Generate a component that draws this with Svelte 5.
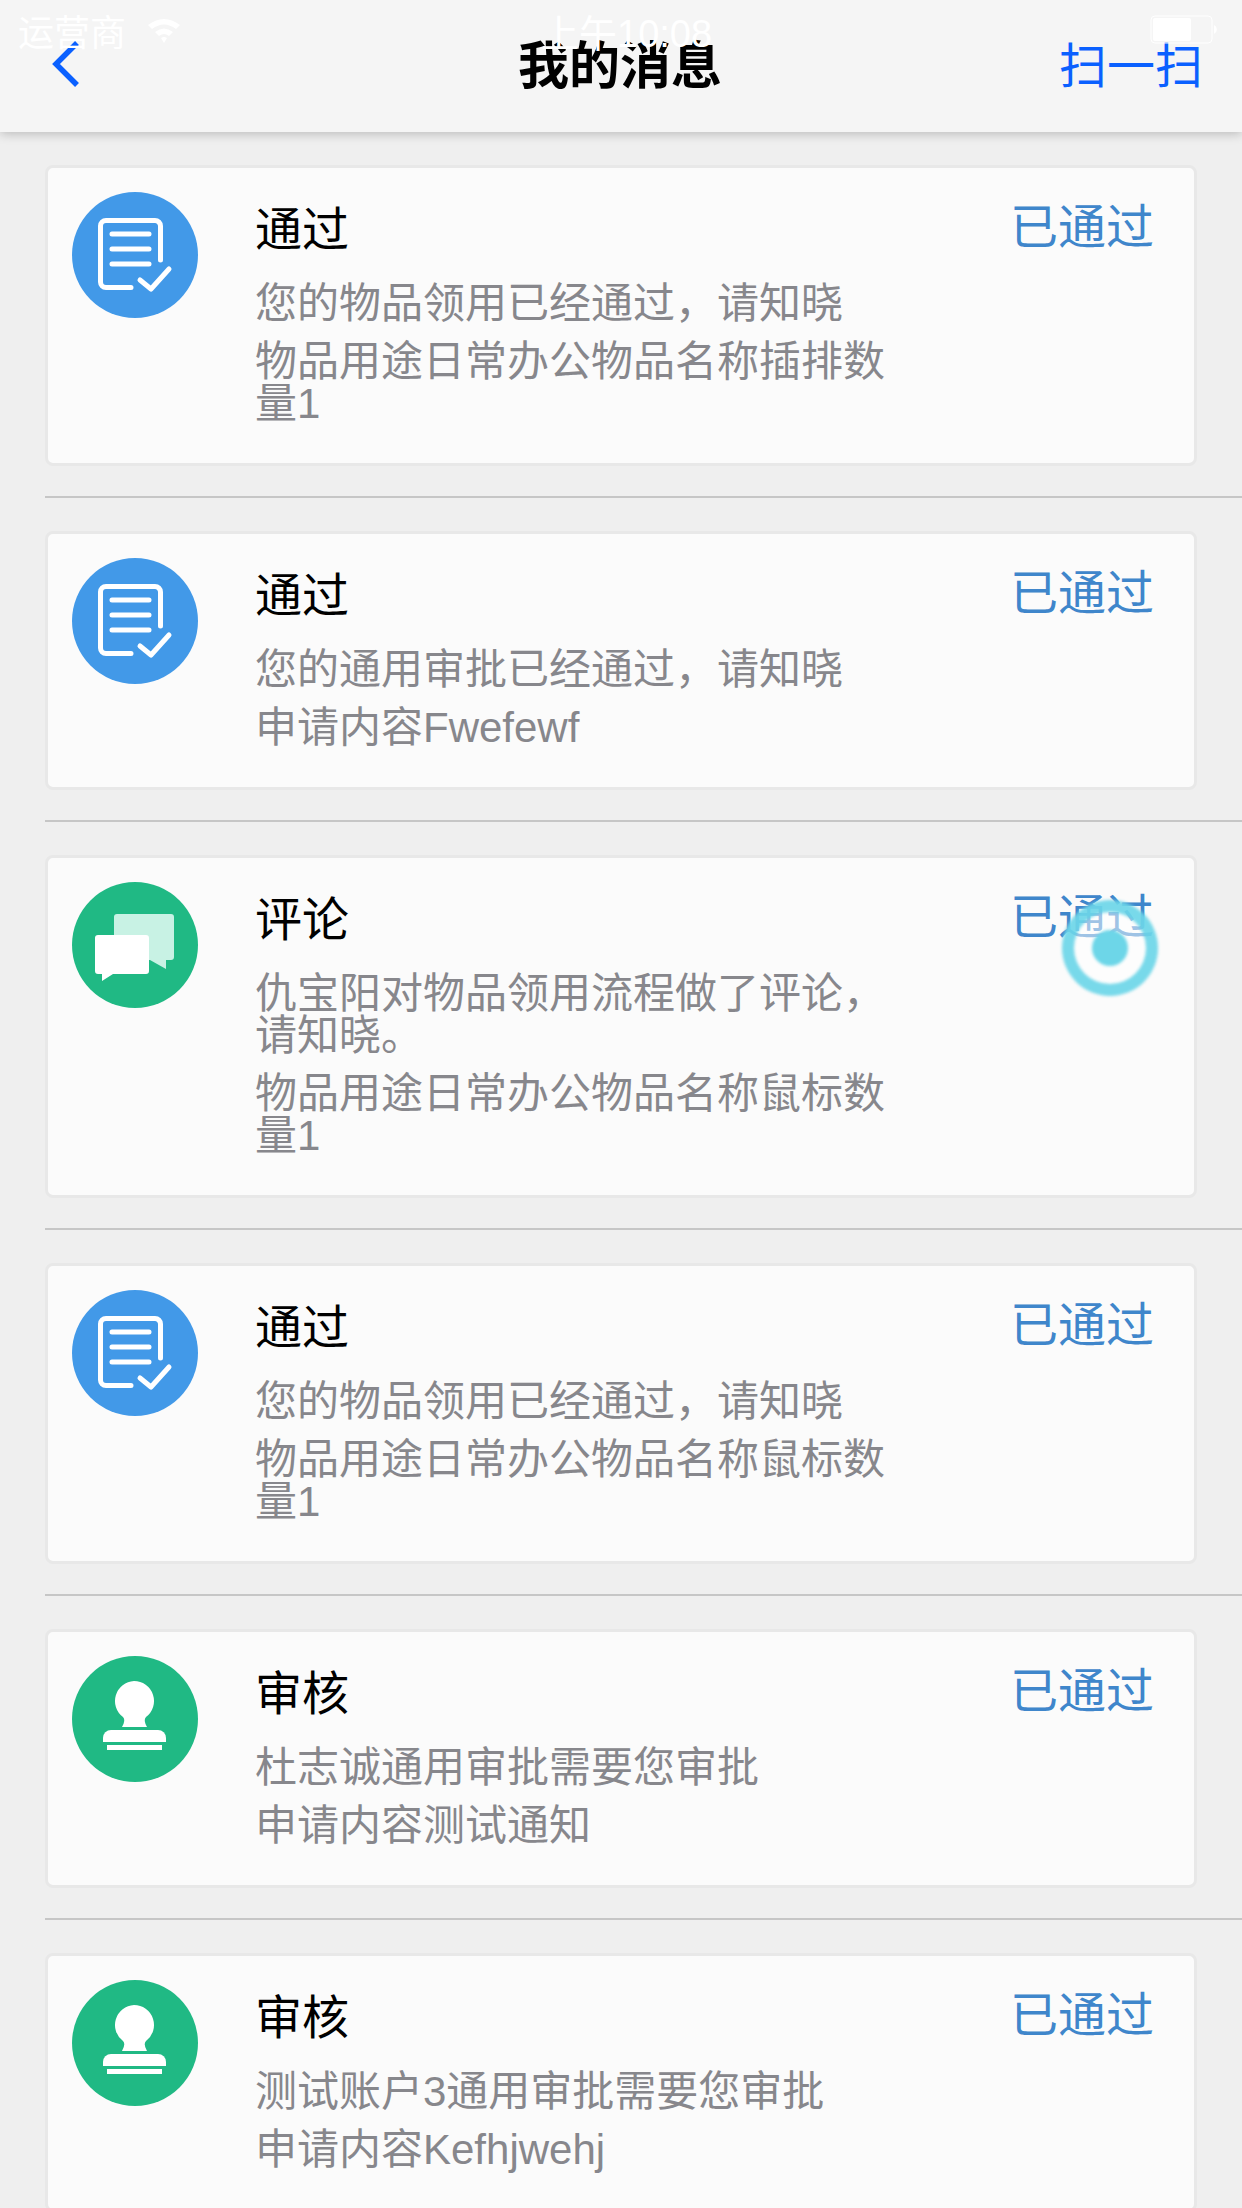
<script>
	const items = [
		{ icon: 'doc', title: '通过', lines: ['您的物品领用已经通过，请知晓', '物品用途日常办公物品名称插排数量1'] },
		{ icon: 'doc', title: '通过', lines: ['您的通用审批已经通过，请知晓', '申请内容Fwefewf'] },
		{ icon: 'chat', title: '评论', lines: ['仇宝阳对物品领用流程做了评论，请知晓。', '物品用途日常办公物品名称鼠标数量1'] },
		{ icon: 'doc', title: '通过', lines: ['您的物品领用已经通过，请知晓', '物品用途日常办公物品名称鼠标数量1'] },
		{ icon: 'stamp', title: '审核', lines: ['杜志诚通用审批需要您审批', '申请内容测试通知'] },
		{ icon: 'stamp', title: '审核', lines: ['测试账户3通用审批需要您审批', '申请内容Kefhjwehj'] }
	];
</script>

<div class="page">
	<header class="nav">
		<svg class="back" width="30" height="46" viewBox="0 0 30 46">
			<path d="M27 2 L6 23 L27 44" fill="none" stroke="#0a60ff" stroke-width="5.5" />
		</svg>
		<h1>我的消息</h1>
		<span class="scan">扫一扫</span>
	</header>

	<div class="statusbar">
		<span class="carrier">运营商</span>
		<svg class="wifi" width="36" height="28" viewBox="0 0 36 28">
			<path d="M2 9 Q18 -3 34 9 L30 13 Q18 4 6 13 Z M9 16 Q18 9 27 16 L23 20 Q18 16 13 20 Z M15 22 Q18 20 21 22 L18 27 Z" fill="#fff" />
		</svg>
		<span class="time">上午10:08</span>
		<svg class="battery" width="68" height="30" viewBox="0 0 68 30">
			<rect x="1" y="1" width="61" height="27" rx="4" fill="none" stroke="#fff" stroke-width="1" />
			<rect x="3" y="3" width="38" height="23" rx="2" fill="#fff" />
			<path d="M64 10 a5 5 0 0 1 0 9 Z" fill="#fff" />
		</svg>
	</div>

	<main class="list">
		{#each items as item}
			<section class="row">
				<article class="card">
					<div class="avatar" class:blue={item.icon === 'doc'}>
						<svg width="126" height="126" viewBox="0 0 126 126">
							{#if item.icon === 'doc'}
								<g fill="none" stroke="#fff" stroke-width="5" stroke-linecap="round" stroke-linejoin="round">
									<path d="M88.5 68 V34 a5.5 5.5 0 0 0 -5.5 -5.5 H34 a5.5 5.5 0 0 0 -5.5 5.5 V90 a5.5 5.5 0 0 0 5.5 5.5 H59" />
									<path d="M40 42 H77 M40 57 H77 M40 72 H77" />
									<path d="M68 88 L79 97 L97 77" />
								</g>
							{:else if item.icon === 'chat'}
								<path d="M45 32 H99 a3 3 0 0 1 3 3 V75 a3 3 0 0 1 -3 3 H94 V87 L78 78 H45 a3 3 0 0 1 -3 -3 V35 a3 3 0 0 1 3 -3 Z" fill="#c8f2e4" />
								<path d="M26 53 H74 a3 3 0 0 1 3 3 V89 a3 3 0 0 1 -3 3 H41 L30 99 V92 H26 a3 3 0 0 1 -3 -3 V56 a3 3 0 0 1 3 -3 Z" fill="#fff" />
							{:else}
								<path d="M62 25 a20 20 0 0 1 12 36 q-3 3 1 10 H50 q4 -7 1 -10 a20 20 0 0 1 11 -36 Z" fill="#fff" />
								<path d="M39 74 H86 a8 8 0 0 1 8 8 V86 H31 V82 a8 8 0 0 1 8 -8 Z" fill="#fff" />
								<rect x="35" y="89" width="55" height="5" fill="#fff" />
							{/if}
						</svg>
					</div>
					<div class="body">
						<h2>{item.title}</h2>
						{#each item.lines as line}
							<p>{line}</p>
						{/each}
					</div>
					<span class="state">已通过</span>
				</article>
			</section>
		{/each}
	</main>

	<div class="float-btn"><i></i></div>
</div>

<style>
	:global(body) {
		margin: 0;
		background: #efefef;
	}

	.page {
		position: relative;
		height: 2208px;
		overflow: hidden;
		background: #efefef;
		font-family: "Liberation Sans", "Noto Sans CJK SC", sans-serif;
	}

	.nav {
		position: relative;
		z-index: 2;
		display: grid;
		grid-template-columns: 1fr auto 1fr;
		align-items: center;
		box-sizing: border-box;
		height: 132px;
		padding: 2px 39px 0 37px;
		background: #f5f5f5;
		box-shadow: 0 2px 10px rgba(0, 0, 0, 0.22);
	}

	.back {
		display: block;
		margin: 0 0 6px 13px;
	}

	.nav h1 {
		margin: 0;
		font-size: 51px;
		line-height: 60px;
		font-weight: 700;
		color: #000;
	}

	.scan {
		justify-self: end;
		font-size: 48px;
		line-height: 60px;
		color: #0a60ff;
	}

	.statusbar {
		position: absolute;
		top: 10px;
		left: 18px;
		right: 18px;
		z-index: 3;
		display: flex;
		align-items: center;
		height: 40px;
		color: #fff;
		font-size: 36px;
	}

	.wifi {
		margin-left: 20px;
	}

	.time {
		margin-left: 359px;
		font-size: 38px;
	}

	.battery {
		margin-left: auto;
		margin-right: 6px;
	}

	.list {
		padding-top: 33px;
	}

	.row {
		margin-left: 45px;
		padding-bottom: 30px;
		margin-bottom: 33px;
		border-bottom: 2px solid #c6c6c6;
	}

	.card {
		display: flex;
		align-items: flex-start;
		box-sizing: border-box;
		width: 1152px;
		min-height: 255px;
		padding: 24px 40px 22px 24px;
		background: #fbfbfb;
		border: 3px solid #e8e8e8;
		border-radius: 8px;
	}

	.avatar {
		flex: none;
		width: 126px;
		height: 126px;
		border-radius: 50%;
		background: #20b984;
	}

	.avatar.blue {
		background: #4299e8;
	}

	.avatar svg {
		display: block;
	}

	.body {
		flex: none;
		width: 640px;
		margin-left: 57px;
	}

	.body h2 {
		margin: 11px 0 26px;
		font-size: 47px;
		line-height: 54px;
		font-weight: 400;
		color: #000;
	}

	.body p {
		margin: 0 0 16px;
		font-size: 42px;
		line-height: 42px;
		color: #87878c;
	}

	.state {
		margin-left: auto;
		margin-top: 8px;
		font-size: 48px;
		line-height: 56px;
		white-space: nowrap;
		color: #3f86cb;
	}

	.float-btn {
		position: absolute;
		left: 1062px;
		top: 900px;
		z-index: 4;
		display: flex;
		align-items: center;
		justify-content: center;
		box-sizing: border-box;
		width: 96px;
		height: 96px;
		border: 12px solid rgba(109, 214, 232, 0.92);
		border-radius: 50%;
		background: rgba(255, 255, 255, 0.5);
		background-clip: padding-box;
		filter: blur(1.5px);
	}

	.float-btn i {
		display: block;
		width: 36px;
		height: 36px;
		border-radius: 50%;
		background: #6dd6e8;
	}
</style>
